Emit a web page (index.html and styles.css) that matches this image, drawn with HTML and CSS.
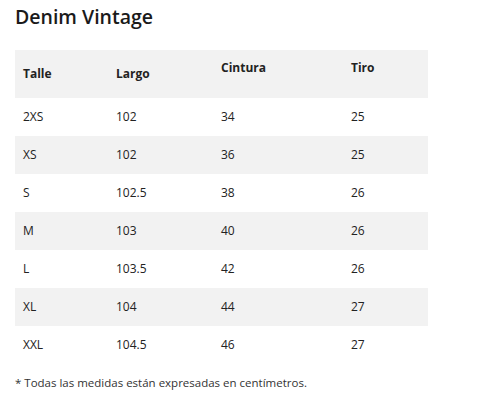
FILE: index.html
```html
<!DOCTYPE html>
<html lang="es">
<head>
<meta charset="utf-8">
<link rel="stylesheet" href="styles.css">
</head>
<body>
<div class="page">
  <h1 class="title">Denim Vintage</h1>
  <table class="sizes">
    <colgroup>
      <col class="c1"><col class="c2"><col class="c3"><col class="c4">
    </colgroup>
    <thead>
      <tr>
        <th>Talle</th><th>Largo</th><th class="top">Cintura</th><th class="top">Tiro</th>
      </tr>
    </thead>
    <tbody>
      <tr><td>2XS</td><td>102</td><td>34</td><td>25</td></tr>
      <tr><td>XS</td><td>102</td><td>36</td><td>25</td></tr>
      <tr><td>S</td><td>102.5</td><td>38</td><td>26</td></tr>
      <tr><td>M</td><td>103</td><td>40</td><td>26</td></tr>
      <tr><td>L</td><td>103.5</td><td>42</td><td>26</td></tr>
      <tr><td>XL</td><td>104</td><td>44</td><td>27</td></tr>
      <tr><td>XXL</td><td>104.5</td><td>46</td><td>27</td></tr>
    </tbody>
  </table>
  <p class="note">* Todas las medidas están expresadas en centímetros.</p>
</div>
</body>
</html>
```
FILE: styles.css
```css
html, body {
  margin: 0;
  padding: 0;
  background: #fff;
}
body {
  font-family: "Open Sans", "Liberation Sans", sans-serif;
  color: #222;
}
.page {
  padding: 4px 15px 0 15px;
}
.title {
  margin: 0;
  font-size: 19.5px;
  line-height: 26px;
  font-weight: 600;
  color: #1a1a1a;
}
.sizes {
  margin-top: 20px;
  width: 413px;
  border-collapse: collapse;
  font-size: 12px;
  table-layout: fixed;
}
.c1 { width: 93px; }
.c2 { width: 105px; }
.c3 { width: 130px; }
.c4 { width: 85px; }
.sizes th,
.sizes td {
  box-sizing: border-box;
  padding: 0 8px;
  line-height: 14px;
  text-align: left;
  vertical-align: middle;
}
.sizes th {
  height: 48px;
  font-weight: 700;
  background: #f2f2f2;
}
.sizes th.top {
  vertical-align: top;
  padding-top: 11px;
}
.sizes td {
  height: 38px;
}
.sizes tbody tr:nth-child(even) td {
  background: #f2f2f2;
}
.note {
  margin: 12px 0 0 0;
  font-size: 11.5px;
  line-height: 14px;
  color: #333;
}
```
